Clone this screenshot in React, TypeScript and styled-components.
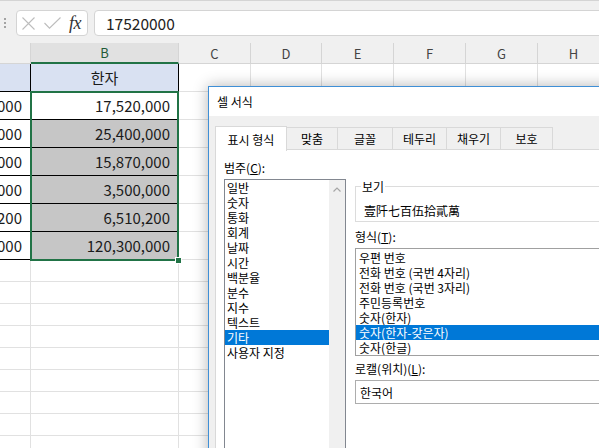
import React from "react";
import styled, { createGlobalStyle } from "styled-components";

const Global = createGlobalStyle`
  html, body { margin: 0; padding: 0; width: 599px; height: 448px; overflow: hidden; background: #fff; }
  body { font-family: "Noto Sans CJK KR", "Noto Sans", sans-serif; color: #000; }
  * { box-sizing: border-box; }
`;

const FONT = `"Noto Sans CJK KR", "Noto Sans", sans-serif`;

const Page = styled.div`
  position: relative;
  width: 599px;
  height: 448px;
  overflow: hidden;
  background: #fff;
  display: flex;
  flex-direction: column;
  font-family: ${FONT};
`;

const FormulaBar = styled.div`
  height: 43px;
  flex: none;
  background: #f0f0f0;
  border-top: 1px solid #d4d4d4;
  display: flex;
  align-items: flex-start;
  padding-top: 9px;
`;

const Grip = styled.div`
  width: 16px;
  height: 26px;
  display: flex;
  align-items: center;
  justify-content: center;
  padding-right: 6px;
`;

const ControlBox = styled.div`
  width: 72px;
  height: 26px;
  background: #fff;
  border: 1px solid #d4d4d4;
  border-radius: 4px;
  display: flex;
  align-items: center;
  padding-left: 5px;
`;

const IconSlot = styled.span<{ $ml?: number }>`
  display: flex;
  align-items: center;
  margin-left: ${(p) => p.$ml ?? 0}px;
`;

const Fx = styled.span`
  margin-left: 8px;
  font-family: "Liberation Serif", "DejaVu Serif", serif;
  font-style: italic;
  font-size: 18px;
  color: #333;
  line-height: 1;
  letter-spacing: -0.5px;
`;

const FormulaInput = styled.div`
  flex: 1;
  margin-left: 6px;
  margin-right: -10px;
  height: 26px;
  background: #fff;
  border: 1px solid #d4d4d4;
  border-radius: 4px;
  padding-left: 11px;
  display: flex;
  align-items: center;
  font-size: 15.5px;
  color: #222;
`;

const Sheet = styled.div`
  position: relative;
  display: grid;
  grid-template-columns: 31px 148px 72px 71px 72px 72px 72px 72px;
  grid-template-rows: 21px repeat(7, 28px) repeat(9, 22px);
`;

const ColHead = styled.div<{ $sel?: boolean }>`
  background: ${(p) => (p.$sel ? "#e1e1e1" : "#f0f0f0")};
  border-right: 1px solid #d5d5d5;
  border-bottom: ${(p) => (p.$sel ? "2px solid #217346" : "1px solid #d5d5d5")};
  display: flex;
  align-items: center;
  justify-content: center;
  font-size: 13px;
  color: ${(p) => (p.$sel ? "#1f5a36" : "#444")};
`;

const Cell = styled.div<{ $bg?: string; $bottom?: string; $right?: string; $align?: string }>`
  background: ${(p) => p.$bg ?? "#fff"};
  border-right: 1px solid ${(p) => p.$right ?? "#e1e1e1"};
  border-bottom: 1px solid ${(p) => p.$bottom ?? "#e1e1e1"};
  display: flex;
  align-items: center;
  justify-content: ${(p) => p.$align ?? "flex-start"};
  padding: 0 8px;
  overflow: hidden;
  white-space: nowrap;
  font-size: 15px;
  color: #1a1a1a;
`;

const Selection = styled.div`
  position: absolute;
  left: 30px;
  top: 48px;
  width: 149px;
  height: 170px;
  border: 2px solid #217346;
  pointer-events: none;
  z-index: 2;
`;

const FillHandle = styled.div`
  position: absolute;
  right: -5px;
  bottom: -5px;
  width: 7px;
  height: 7px;
  background: #217346;
  border: 1px solid #fff;
`;

const Dialog = styled.div`
  position: absolute;
  left: 208px;
  top: 86px;
  width: 440px;
  height: 400px;
  display: flex;
  flex-direction: column;
  border: 1px solid #3f8fd6;
  background: #f0f0f0;
  box-shadow: 0 0 14px rgba(0, 0, 0, 0.3);
  font-size: 12px;
  color: #000;
  z-index: 5;
`;

const TitleBar = styled.div`
  height: 29px;
  flex: none;
  background: #fff;
  display: flex;
  align-items: center;
  padding-left: 8px;
  font-size: 12px;
`;

const DialogBody = styled.div`
  flex: 1;
  display: flex;
  flex-direction: column;
  padding: 9px 0 0 6px;
`;

const Tabs = styled.div`
  height: 25px;
  display: flex;
  align-items: flex-end;
  flex: none;
`;

const Tab = styled.div<{ $w: number; $active?: boolean }>`
  position: relative;
  z-index: ${(p) => (p.$active ? 1 : 0)};
  width: ${(p) => p.$w}px;
  height: ${(p) => (p.$active ? 25 : 23)}px;
  margin-bottom: ${(p) => (p.$active ? -1 : 0)}px;
  background: ${(p) => (p.$active ? "#fff" : "#f0f0f0")};
  border: 1px solid #d9d9d9;
  border-left: ${(p) => (p.$active ? "1px solid #d9d9d9" : "none")};
  border-bottom: ${(p) => (p.$active ? "none" : "1px solid #d9d9d9")};
  display: flex;
  align-items: center;
  justify-content: center;
  font-size: 12px;
`;

const Panel = styled.div`
  flex: 1;
  margin-top: -1px;
  background: #fff;
  border: 1px solid #d9d9d9;
  display: grid;
  grid-template-columns: 122px 1fr;
  column-gap: 9px;
  align-items: start;
  padding: 10px 0 0 8px;
`;

const Column = styled.div<{ $pt?: number }>`
  display: flex;
  flex-direction: column;
  padding-top: ${(p) => p.$pt ?? 0}px;
`;

const Label = styled.div<{ $mt?: number; $mb?: number }>`
  line-height: 15px;
  height: 15px;
  margin-top: ${(p) => p.$mt ?? 0}px;
  margin-bottom: ${(p) => p.$mb ?? 0}px;
  white-space: nowrap;
`;

const CategoryList = styled.div`
  height: 300px;
  display: flex;
  border: 1px solid #828790;
  background: #fff;
`;

const Items = styled.div<{ $pl?: number }>`
  flex: 1;
  display: flex;
  flex-direction: column;
  padding-top: 0;
`;

const Item = styled.div<{ $sel?: boolean; $pl?: number }>`
  height: 15px;
  line-height: 15px;
  padding-left: ${(p) => p.$pl ?? 2}px;
  white-space: nowrap;
  background: ${(p) => (p.$sel ? "#0078d7" : "transparent")};
  color: ${(p) => (p.$sel ? "#fff" : "#000")};
`;

const ScrollBar = styled.div`
  width: 16px;
  background: #f0f0f0;
  display: flex;
  flex-direction: column;
  align-items: center;
  padding-top: 7px;
`;

const GroupBox = styled.fieldset`
  margin: 0;
  padding: 0 0 3px 5px;
  border: 1px solid #dcdcdc;
  min-width: 0;
`;

const Legend = styled.legend`
  padding: 0 1px;
  line-height: 15px;
  font-size: 12px;
`;

const Preview = styled.div`
  margin-top: 9px;
  padding-left: 3px;
  line-height: 15px;
  height: 15px;
  white-space: nowrap;
`;

const FormatList = styled.div`
  margin-top: 4px;
  border: 1px solid #a0a0a0;
  padding-top: 1px;
  background: #fff;
`;

const LocaleBox = styled.div`
  margin-top: 4px;
  height: 24px;
  border: 1px solid #adadad;
  padding-left: 4px;
  display: flex;
  align-items: center;
  background: #fff;
`;

const letters = ["", "B", "C", "D", "E", "F", "G", "H"];
const aVals = ["3,000", "5,000", "2,000", "1,000", "4,200", "8,000"];
const bVals = ["17,520,000", "25,400,000", "15,870,000", "3,500,000", "6,510,200", "120,300,000"];
const categories = ["일반", "숫자", "통화", "회계", "날짜", "시간", "백분율", "분수", "지수", "텍스트", "기타", "사용자 지정"];
const formats = ["우편 번호", "전화 번호 (국번 4자리)", "전화 번호 (국번 3자리)", "주민등록번호", "숫자(한자)", "숫자(한자-갖은자)", "숫자(한글)"];
const tabs: [string, number][] = [["표시 형식", 72], ["맞춤", 51], ["글꼴", 55], ["테두리", 54], ["채우기", 54], ["보호", 52]];

function PlainCells({ from }: { from: number }) {
  return (
    <>
      {letters.slice(from).map((l) => (
        <Cell key={l} />
      ))}
    </>
  );
}

export default function App() {
  return (
    <Page>
      <Global />
      <FormulaBar>
        <Grip>
          <svg width="4" height="12" viewBox="0 0 4 12">
            <circle cx="2" cy="2" r="1" fill="#8a8a8a" />
            <circle cx="2" cy="6" r="1" fill="#8a8a8a" />
            <circle cx="2" cy="10" r="1" fill="#8a8a8a" />
          </svg>
        </Grip>
        <ControlBox>
          <IconSlot>
            <svg width="13" height="13" viewBox="0 0 13 13">
              <path d="M0.5 0.5 L12.5 12.5 M12.5 0.5 L0.5 12.5" stroke="#bdbdbd" strokeWidth="1.1" fill="none" />
            </svg>
          </IconSlot>
          <IconSlot $ml={9}>
            <svg width="17" height="12" viewBox="0 0 17 12">
              <path d="M0.5 6 L5.5 11.2 L16.5 0.5" stroke="#bdbdbd" strokeWidth="1.1" fill="none" />
            </svg>
          </IconSlot>
          <Fx>fx</Fx>
        </ControlBox>
        <FormulaInput>17520000</FormulaInput>
      </FormulaBar>

      <Sheet>
        {letters.map((l, i) => (
          <ColHead key={"h" + i} $sel={l === "B"}>
            {l}
          </ColHead>
        ))}

        <Cell $bg="#d9e1f2" $bottom="#000" $right="#000" />
        <Cell $bg="#d9e1f2" $bottom="#000" $right="#000" $align="center">
          한자
        </Cell>
        <PlainCells from={2} />

        {bVals.map((v, i) => (
          <React.Fragment key={v}>
            <Cell $bottom="#000" $align="flex-end">
              {aVals[i]}
            </Cell>
            <Cell $bg={i === 0 ? "#fff" : "#c6c6c6"} $bottom="#000" $right="#000" $align="flex-end">
              {v}
            </Cell>
            <PlainCells from={2} />
          </React.Fragment>
        ))}

        {Array.from({ length: 9 }).map((_, r) => (
          <React.Fragment key={"e" + r}>
            <PlainCells from={0} />
          </React.Fragment>
        ))}

        <Selection>
          <FillHandle />
        </Selection>
      </Sheet>

      <Dialog>
        <TitleBar>셀 서식</TitleBar>
        <DialogBody>
          <Tabs>
            {tabs.map(([t, w], i) => (
              <Tab key={t} $w={w} $active={i === 0}>
                {t}
              </Tab>
            ))}
          </Tabs>
          <Panel>
            <Column>
              <Label $mb={4}>
                범주(<u>C</u>):
              </Label>
              <CategoryList>
                <Items>
                  {categories.map((c) => (
                    <Item key={c} $sel={c === "기타"}>
                      {c}
                    </Item>
                  ))}
                </Items>
                <ScrollBar>
                  <svg width="8" height="5" viewBox="0 0 8 5">
                    <path d="M0.5 4.5 L4 1 L7.5 4.5" stroke="#a6a6a6" strokeWidth="1.2" fill="none" />
                  </svg>
                </ScrollBar>
              </CategoryList>
            </Column>
            <Column $pt={19}>
              <GroupBox>
                <Legend>보기</Legend>
                <Preview>壹阡七百伍拾貳萬</Preview>
              </GroupBox>
              <Label $mt={7}>
                형식(<u>T</u>):
              </Label>
              <FormatList>
                {formats.map((f, i) => (
                  <Item key={f} $sel={i === 5} $pl={3}>
                    {f}
                  </Item>
                ))}
              </FormatList>
              <Label $mt={5}>
                로캘(위치)(<u>L</u>):
              </Label>
              <LocaleBox>한국어</LocaleBox>
            </Column>
          </Panel>
        </DialogBody>
      </Dialog>
    </Page>
  );
}
